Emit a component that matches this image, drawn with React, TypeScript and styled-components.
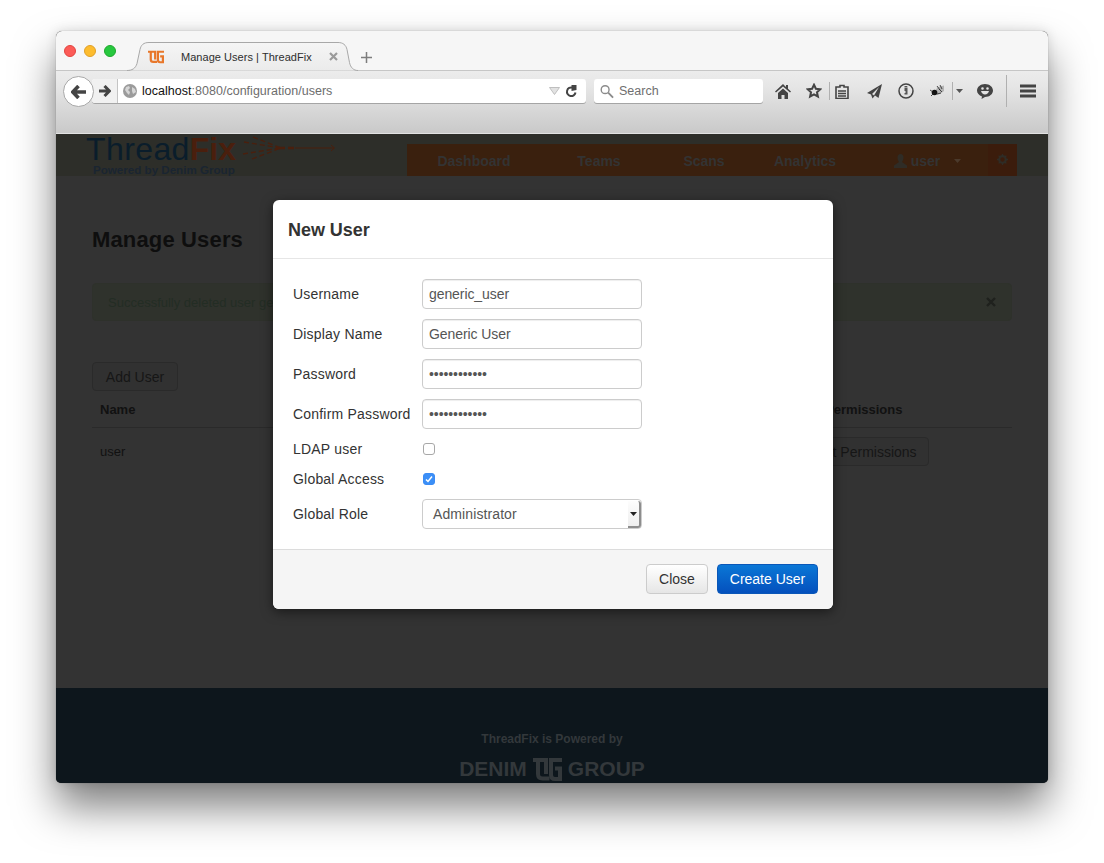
import React from "react";
import styled, { createGlobalStyle } from "styled-components";

const Global = createGlobalStyle`
  html, body { margin: 0; padding: 0; background: #fff; overflow: hidden; }
  body { font-family: "Liberation Sans", Arial, sans-serif; }
  * { box-sizing: border-box; }
`;

const Screen = styled.div`
  height: 863px;
  padding: 31px 56px 80px;
`;
const Win = styled.div`
  position: relative;
  width: 992px;
  height: 752px;
  border-radius: 6px 6px 5px 5px;
  display: flex;
  flex-direction: column;
  background: #333;
  box-shadow: 0 24px 42px rgba(0, 0, 0, 0.5), 0 0 12px rgba(0, 0, 0, 0.12), 0 0 1px rgba(0, 0, 0, 0.45);
`;
const TabStrip = styled.div`
  flex: none;
  height: 40px;
  display: flex;
  align-items: flex-end;
  padding-left: 8px;
  background: #f6f6f6;
  border-bottom: 1px solid #c6c6c6;
  border-radius: 6px 6px 0 0;
`;
const Lights = styled.div`
  display: flex;
  gap: 8px;
  align-self: flex-start;
  margin-top: 14px;
  width: 63px;
`;
const Light = styled.span<{ $c: string; $b: string }>`
  width: 12px;
  height: 12px;
  border-radius: 50%;
  background: ${(p) => p.$c};
  border: 1px solid ${(p) => p.$b};
`;
const Tab = styled.div`
  position: relative;
  width: 231px;
  height: 29px;
  margin-bottom: -1px;
  display: flex;
  align-items: center;
  padding: 0 20px 0 21px;
  font-size: 11px;
  color: #2e2e2e;
`;
const TabShape = styled.svg`
  position: absolute;
  inset: 0;
`;
const FaviconSlot = styled.span`
  position: relative;
  flex: none;
  display: flex;
  margin-right: 17px;
`;
const TabTitle = styled.span`
  position: relative;
  flex: 1;
  letter-spacing: 0.04px;
  white-space: nowrap;
`;
const TabClose = styled.svg`
  position: relative;
  flex: none;
`;
const NewTab = styled.svg`
  flex: none;
  margin: 0 0 7px 3px;
`;

const Toolbar = styled.div`
  flex: none;
  height: 63px;
  display: flex;
  align-items: flex-start;
  padding: 8px 0 0 36px;
  background: linear-gradient(#ececec, #e6e6e6 25%, #c9c9c9);
  border-bottom: 1px solid #e2e2e2;
`;
const BackCircle = styled.div`
  position: absolute;
  left: 7px;
  top: 45px;
  width: 31px;
  height: 31px;
  border-radius: 50%;
  background: #fff;
  border: 1px solid #a9a9a9;
  display: flex;
  align-items: center;
  justify-content: center;
  z-index: 2;
`;
const UrlBar = styled.div`
  flex: none;
  width: 494px;
  height: 24px;
  display: flex;
  align-items: center;
  background: #fff;
  border-radius: 3px;
  box-shadow: 0 1px 0 #a5a5a5;
  padding-right: 8px;
`;
const ForwardCell = styled.div`
  width: 26px;
  height: 100%;
  flex: none;
  padding-left: 7px;
  display: flex;
  align-items: center;
  background: #f1f1f1;
  border-right: 1px solid #c4c4c4;
  border-radius: 3px 0 0 3px;
`;
const Globe = styled.svg`
  flex: none;
  margin: 0 5px 0 5px;
`;
const UrlText = styled.span`
  flex: 1;
  font-size: 12.5px;
  color: #6d6d6d;
  letter-spacing: 0.02px;
  b { font-weight: 400; color: #111; }
`;
const UrlArrow = styled.svg`
  flex: none;
`;
const UrlReload = styled.svg`
  flex: none;
  margin-left: 5px;
`;
const SearchBox = styled.div`
  flex: none;
  width: 169px;
  height: 24px;
  margin-left: 8px;
  display: flex;
  align-items: center;
  gap: 5px;
  padding-left: 6px;
  background: #fff;
  border-radius: 3px;
  box-shadow: 0 1px 0 #a5a5a5;
  font-size: 12.5px;
  color: #6f6f6f;
`;
const ToolIcons = styled.div`
  height: 24px;
  display: flex;
  align-items: center;
  margin-left: 12px;
`;
const ToolIcon = styled.svg<{ $w: number; $ml?: number }>`
  flex: none;
  width: ${(p) => p.$w}px;
  margin-left: ${(p) => p.$ml ?? 0}px;
`;
const ToolSep = styled.span<{ $h?: number; $gap: number }>`
  flex: none;
  width: 1px;
  height: ${(p) => p.$h ?? 18}px;
  margin: 0 ${(p) => p.$gap}px;
  background: #b0b0b0;
`;

const Page = styled.div`
  flex: 1;
  display: flex;
  flex-direction: column;
  min-height: 0;
`;
const Header = styled.div`
  flex: none;
  height: 42px;
  display: flex;
  justify-content: space-between;
  align-items: flex-end;
  padding: 0 31px 0 30px;
  background: #2d2e29;
`;
const Logo = styled.div`
  position: relative;
  align-self: flex-start;
  height: 42px;
  width: 260px;
`;
const LogoWord = styled.div`
  font-size: 32px;
  line-height: 32px;
  margin-top: -1px;
  letter-spacing: 0.4px;
  color: #0a1d2b;
  white-space: nowrap;
  b { color: #4a1f0d; letter-spacing: 0; }
`;
const LogoTag = styled.div`
  font-size: 11.6px;
  font-weight: 700;
  line-height: 12px;
  margin: -1px 0 0 7px;
  color: #1a2531;
  white-space: nowrap;
`;
const LogoArrow = styled.svg`
  position: absolute;
  left: 155px;
  top: 2px;
`;
const Nav = styled.div`
  width: 610px;
  height: 32px;
  display: flex;
  background: #3a200e;
`;
const NavItem = styled.div<{ $w: number; $pl?: number }>`
  width: ${(p) => p.$w}px;
  display: flex;
  align-items: center;
  justify-content: center;
  gap: 4px;
  padding: 2px 0 0 ${(p) => p.$pl ?? 0}px;
  font-size: 14px;
  font-weight: 700;
  color: #333;
`;
const NavCaret = styled.svg`
  flex: none;
  margin-left: 10px;
`;
const NavGear = styled.div`
  width: 29px;
  display: flex;
  align-items: center;
  justify-content: center;
  padding-bottom: 2px;
  background: #3b1c0c;
`;
const Main = styled.div`
  flex: 1;
  padding: 51px 36px 0;
  background: #333;
`;
const Title = styled.h2`
  margin: 0;
  font-size: 22px;
  line-height: 26px;
  font-weight: 700;
  letter-spacing: 0.15px;
  color: #0e0e0e;
`;
const Alert = styled.div`
  height: 38px;
  margin-top: 30px;
  padding: 0 15px;
  display: flex;
  align-items: center;
  justify-content: space-between;
  background: #2f322c;
  border: 1px solid #2e312b;
  border-radius: 4px;
  font-size: 13px;
  color: #232d24;
`;
const AlertClose = styled.svg`
  flex: none;
`;
const GhostButton = styled.div`
  display: inline-flex;
  align-items: center;
  justify-content: center;
  border: 1px solid #2a2a2a;
  border-radius: 4px;
  background: #313131;
  color: #161616;
  font-size: 14px;
`;
const AddButton = styled(GhostButton)`
  width: 86px;
  height: 29px;
  margin-top: 41px;
`;
const Row = styled.div<{ $h: number; $line?: boolean }>`
  height: ${(p) => p.$h}px;
  display: grid;
  grid-template-columns: 702px 1fr;
  align-items: center;
  padding-left: 8px;
  border-bottom: ${(p) => (p.$line ? "1px solid #2a2a2a" : "none")};
  font-size: 13px;
  color: #111;
`;
const HeadCell = styled.span`
  font-weight: 700;
  white-space: nowrap;
`;
const PermHead = styled(HeadCell)`
  margin-left: -5px;
`;
const EditButton = styled(GhostButton)`
  width: 127px;
  height: 29px;
  padding-right: 2px;
`;
const Footer = styled.div`
  flex: none;
  height: 95px;
  padding-top: 44px;
  display: flex;
  flex-direction: column;
  align-items: center;
  background: #0d161c;
  color: #33383b;
  border-radius: 0 0 5px 5px;
`;
const FooterLine = styled.div`
  font-size: 12px;
  font-weight: 700;
  line-height: 14px;
`;
const FooterBrand = styled.div`
  display: flex;
  align-items: center;
  gap: 6px;
  margin-top: 11px;
  font-size: 21px;
  font-weight: 700;
  line-height: 24px;
`;

const Modal = styled.div`
  position: absolute;
  left: 217px;
  top: 169px;
  width: 560px;
  height: 409px;
  background: #fff;
  border-radius: 6px;
  box-shadow: 0 3px 12px rgba(0, 0, 0, 0.5);
  display: flex;
  flex-direction: column;
  overflow: hidden;
  z-index: 3;
`;
const ModalHead = styled.div`
  flex: none;
  height: 59px;
  padding: 2px 15px 0;
  display: flex;
  align-items: center;
  border-bottom: 1px solid #e6e6e6;
  font-size: 18px;
  font-weight: 700;
  letter-spacing: -0.05px;
  color: #333;
`;
const ModalBody = styled.div`
  flex: 1;
  padding: 20px 20px 0;
  display: flex;
  flex-direction: column;
  gap: 10px;
`;
const FormRow = styled.div<{ $h: number }>`
  height: ${(p) => p.$h}px;
  display: flex;
  align-items: center;
`;
const FieldLabel = styled.label`
  width: 129px;
  flex: none;
  font-size: 14px;
  letter-spacing: 0.2px;
  color: #333;
  white-space: nowrap;
`;
const TextField = styled.input`
  width: 220px;
  height: 30px;
  padding: 0 6px;
  border: 1px solid #ccc;
  border-radius: 4px;
  outline: none;
  background: #fff;
  color: #555;
  font: 14px "Liberation Sans", Arial, sans-serif;
  letter-spacing: -0.08px;
  box-shadow: inset 0 1px 1px rgba(0, 0, 0, 0.07);
`;
const Check = styled.span<{ $on?: boolean }>`
  width: 12px;
  height: 12px;
  margin-left: 1px;
  display: flex;
  align-items: center;
  justify-content: center;
  border-radius: 3px;
  border: 1px solid ${(p) => (p.$on ? "#3b8cf5" : "#a8a8a8")};
  background: ${(p) => (p.$on ? "#3b8ff7" : "#fff")};
`;
const SelectBox = styled.div`
  position: relative;
  width: 220px;
  height: 30px;
  display: flex;
  align-items: center;
  padding-left: 10px;
  border: 1px solid #ccc;
  border-radius: 4px;
  background: #fff;
  color: #555;
  font-size: 14px;
  letter-spacing: 0.1px;
`;
const SelectStep = styled.span`
  position: absolute;
  right: 0;
  top: 1px;
  bottom: 0;
  width: 13px;
  display: flex;
  align-items: center;
  justify-content: center;
  background: linear-gradient(#fdfdfd, #eee);
  border-right: 2px solid #8d8d8d;
  border-bottom: 2px solid #8d8d8d;
  border-radius: 0 3px 3px 0;
`;
const ModalFoot = styled.div`
  flex: none;
  height: 60px;
  padding: 14px 15px;
  display: flex;
  justify-content: flex-end;
  gap: 9px;
  background: #f5f5f5;
  border-top: 1px solid #dcdcdc;
`;
const CloseBtn = styled.div`
  width: 62px;
  height: 30px;
  display: flex;
  align-items: center;
  justify-content: center;
  border: 1px solid #ccc;
  border-radius: 4px;
  background: linear-gradient(#fff, #e6e6e6);
  color: #333;
  font-size: 14px;
`;
const CreateBtn = styled.div`
  width: 101px;
  height: 30px;
  display: flex;
  align-items: center;
  justify-content: center;
  border: 1px solid #0a57b8;
  border-radius: 4px;
  background: linear-gradient(#0a77d6, #0450bd);
  color: #fff;
  font-size: 14px;
`;

const DgMark = ({ w, h, c }: { w: number; h: number; c: string }) => (
  <svg width={w} height={h} viewBox="0 0 29 23" style={{ flex: "none" }}>
    <g fill="none" stroke={c} strokeWidth="4">
      <path d="M0 2H13V16" />
      <path d="M5 2V16Q5 20.500 9.500 20.500H16.500" />
      <path d="M29 2H18V17Q18 21 22 21H27V10.500H22" />
    </g>
  </svg>
);

export default function App() {
  return (
    <Screen>
      <Global />
      <Win>
        <TabStrip>
          <Lights>
            <Light $c="#fc5b57" $b="#e2443f" />
            <Light $c="#fdbc2e" $b="#e0a028" />
            <Light $c="#27c83f" $b="#1fa82e" />
          </Lights>
          <Tab>
            <TabShape width="231" height="29" viewBox="0 0 231 29">
              <defs>
                <linearGradient id="tabFill" x1="0" y1="0" x2="0" y2="1">
                  <stop offset="0" stopColor="#f5f5f5" />
                  <stop offset="1" stopColor="#ebebeb" />
                </linearGradient>
              </defs>
              <path
                d="M0 28.500c5 0 8.500-2 10-7l3-14c1-4.500 3.500-7 9-7h189c5 0 8 2.500 9 7l2.500 13c1 5 4 8 8.500 8"
                fill="url(#tabFill)"
                stroke="#a8a8a8"
                strokeWidth="1"
              />
            </TabShape>
            <FaviconSlot>
              <DgMark w={16} h={14} c="#e8772a" />
            </FaviconSlot>
            <TabTitle>Manage Users | ThreadFix</TabTitle>
            <TabClose width="9" height="9" viewBox="0 0 9 9">
              <path d="M1 1l7 7M8 1L1 8" stroke="#9a9a9a" strokeWidth="2.200" />
            </TabClose>
          </Tab>
          <NewTab width="11" height="11" viewBox="0 0 11 11">
            <path d="M5.500 0v11M0 5.500h11" stroke="#7d7d7d" strokeWidth="1.500" />
          </NewTab>
        </TabStrip>

        <BackCircle>
          <svg width="15" height="14" viewBox="0 0 15 14">
            <path d="M7.500 1L1.800 7l5.700 6M2 7H15" fill="none" stroke="#444" strokeWidth="3.600" />
          </svg>
        </BackCircle>

        <Toolbar>
          <UrlBar>
            <ForwardCell>
              <svg width="12" height="12" viewBox="0 0 12 12" style={{ flex: "none" }}>
                <path d="M5.500 1L10.500 6l-5 5M0 6h10" fill="none" stroke="#444" strokeWidth="3" />
              </svg>
            </ForwardCell>
            <Globe width="14" height="14" viewBox="0 0 14 14">
              <circle cx="7" cy="7" r="7" fill="#9b9b9b" />
              <path d="M3 3l3-1 1 2-2 2 2 2-1 3-2-2-2-3zM9 3l3 2 1 3-3 2-1-3z" fill="#d6d6d6" />
            </Globe>
            <UrlText>
              <b>localhost</b>:8080/configuration/users
            </UrlText>
            <UrlArrow width="11" height="8" viewBox="0 0 11 8">
              <path d="M0.500 0.500h10L5.500 7.500z" fill="#e2e2e2" stroke="#bfbfbf" />
            </UrlArrow>
            <UrlReload width="13" height="13" viewBox="0 0 13 13">
              <path d="M10.500 7.500A4.300 4.300 0 1 1 7.500 2.600" fill="none" stroke="#444" strokeWidth="2" />
              <path d="M6.500 0v6l5-1V0z" fill="#444" />
            </UrlReload>
          </UrlBar>
          <SearchBox>
            <svg width="14" height="15" viewBox="0 0 15 15" style={{ flex: "none" }}>
              <circle cx="5.500" cy="5.500" r="4.200" fill="none" stroke="#8b8b8b" strokeWidth="1.500" />
              <path d="M8.800 8.800L14 14" stroke="#8b8b8b" strokeWidth="2" />
            </svg>
            Search
          </SearchBox>
          <ToolIcons>
            <ToolIcon $w={16} height="15" viewBox="0 0 16 15">
              <path d="M8 0L0 7.500l1 1L8 2.500l7 6 1-1-3-2.800V1h-2v2zM3 9v6h3.500v-4h3v4H13V9L8 4.500z" fill="#444" />
            </ToolIcon>
            <ToolIcon $w={16} $ml={15} height="16" viewBox="0 0 16 16">
              <path d="M8 1.800l1.900 4 4.300.5-3.200 3 .9 4.300L8 11.400l-3.900 2.200.9-4.300-3.200-3 4.300-.5z" fill="none" stroke="#444" strokeWidth="2" />
            </ToolIcon>
            <ToolSep $gap={7} />
            <ToolIcon $w={14} $ml={-2} height="15" viewBox="0 0 14 15">
              <path d="M5 1.500h4V3h4v11.500H1V3h4zM3 7h8M3 9.500h8M3 12h8" fill="none" stroke="#444" strokeWidth="1.600" />
            </ToolIcon>
            <ToolIcon $w={15} $ml={18} height="15" viewBox="0 0 15 15">
              <path d="M15 0L0 9l4 1.500 1.500 4 2.500-3 3.500 2.500zM5 10l7-7-5 8.500z" fill="#444" fillRule="evenodd" />
            </ToolIcon>
            <ToolIcon $w={16} $ml={16} height="16" viewBox="0 0 16 16">
              <circle cx="8" cy="8" r="7" fill="none" stroke="#444" strokeWidth="1.500" />
              <path d="M6.500 4.500H9.500v7h-3V10h1V8h-1zM6.500 3h2.800v1h-2.800z" fill="#555" />
            </ToolIcon>
            <ToolIcon $w={16} $ml={16} height="12" viewBox="0 0 16 12">
              <path d="M4 7l4-5 6-1.500L14 6l-4 3-4 1z" fill="#b4b4b4" />
              <circle cx="4.500" cy="7.500" r="2.800" fill="#111" />
              <path d="M0 5l3 2M1 11l3-3M7 1l3 4M10 0l2 4M7 9l4-1M9 4l3 3" stroke="#222" strokeWidth="0.800" />
            </ToolIcon>
            <ToolSep $gap={6} />
            <ToolIcon $w={7} $ml={-3} height="4" viewBox="0 0 7 4">
              <path d="M0 0h7L3.500 4z" fill="#555" />
            </ToolIcon>
            <ToolIcon $w={16} $ml={14} height="15" viewBox="0 0 16 15">
              <path fillRule="evenodd" fill="#444" d="M8 0c4.400 0 8 2.900 8 6.500S12.400 13 8 13l-3.500 2 .5-2.600C2 11.500 0 9.200 0 6.500 0 2.900 3.600 0 8 0zM4 7c.6 2.300 2 3.500 4 3.500S11.400 9.300 12 7zM5.500 3.200a1.300 1.300 0 1 0 0 2.600 1.300 1.300 0 0 0 0-2.600zm5 0a1.300 1.300 0 1 0 0 2.600 1.300 1.300 0 0 0 0-2.600z" />
            </ToolIcon>
            <ToolSep $gap={13} $h={32} />
            <ToolIcon $w={16} height="14" viewBox="0 0 16 14">
              <path d="M0 2h16M0 7h16M0 12h16" stroke="#444" strokeWidth="2.800" />
            </ToolIcon>
          </ToolIcons>
        </Toolbar>

        <Page>
          <Header>
            <Logo>
              <LogoWord>
                Thread<b>Fix</b>
              </LogoWord>
              <LogoTag>Powered by Denim Group</LogoTag>
              <LogoArrow width="95" height="24" viewBox="0 0 95 24">
                <g stroke="#4a1f0d" strokeWidth="1.300" fill="none">
                  <path strokeDasharray="5 3" d="M12 1l28 11M3 6l37 6M2 18l38-6M11 23l29-11" />
                  <path strokeDasharray="6 3" strokeWidth="2.500" d="M38 12h16" />
                  <path strokeWidth="1" d="M54 12h39M90 9l3.500 3-3.500 3" />
                </g>
              </LogoArrow>
            </Logo>
            <Nav>
              <NavItem $w={134}>Dashboard</NavItem>
              <NavItem $w={116}>Teams</NavItem>
              <NavItem $w={94}>Scans</NavItem>
              <NavItem $w={108}>Analytics</NavItem>
              <NavItem $w={129} $pl={8}>
                <svg width="13" height="14" viewBox="0 0 13 14">
                  <path fill="#2f2c26" d="M6.500 0C8.500 0 9.500 1.500 9.500 3.500S8.500 7.500 8 8l5 3.500V14H0v-2.500L5 8c-.5-.5-1.500-2.500-1.500-4.500S4.500 0 6.500 0z" />
                </svg>
                <span>user</span>
                <NavCaret width="7" height="4" viewBox="0 0 7 4">
                  <path d="M0 0h7L3.500 4z" fill="#4b3a2c" />
                </NavCaret>
              </NavItem>
              <NavGear>
                <svg width="11" height="11" viewBox="0 0 11 11">
                  <circle cx="5.500" cy="5.500" r="3.300" fill="none" stroke="#2f2c26" strokeWidth="2.200" />
                  <path d="M5.500 0v11M0 5.500h11M1.600 1.600l7.800 7.800M9.400 1.600L1.600 9.400" stroke="#2f2c26" strokeWidth="1.300" strokeDasharray="2 7" />
                </svg>
              </NavGear>
            </Nav>
          </Header>
          <Main>
            <Title>Manage Users</Title>
            <Alert>
              <span>Successfully deleted user generic_user.</span>
              <AlertClose width="10" height="10" viewBox="0 0 10 10">
                <path d="M1 1l8 8M9 1L1 9" stroke="#1f211d" strokeWidth="2.400" />
              </AlertClose>
            </Alert>
            <AddButton>Add User</AddButton>
            <Row $h={37} $line>
              <HeadCell>Name</HeadCell>
              <PermHead>Edit Permissions</PermHead>
            </Row>
            <Row $h={47}>
              <span>user</span>
              <EditButton>Edit Permissions</EditButton>
            </Row>
          </Main>
          <Footer>
            <FooterLine>ThreadFix is Powered by</FooterLine>
            <FooterBrand>
              DENIM
              <DgMark w={29} h={23} c="#33383b" />
              GROUP
            </FooterBrand>
          </Footer>
        </Page>

        <Modal>
          <ModalHead>New User</ModalHead>
          <ModalBody>
            <FormRow $h={30}>
              <FieldLabel>Username</FieldLabel>
              <TextField readOnly value="generic_user" />
            </FormRow>
            <FormRow $h={30}>
              <FieldLabel>Display Name</FieldLabel>
              <TextField readOnly value="Generic User" />
            </FormRow>
            <FormRow $h={30}>
              <FieldLabel>Password</FieldLabel>
              <TextField readOnly type="password" value="genericuser1" />
            </FormRow>
            <FormRow $h={30}>
              <FieldLabel>Confirm Password</FieldLabel>
              <TextField readOnly type="password" value="genericuser1" />
            </FormRow>
            <FormRow $h={20}>
              <FieldLabel>LDAP user</FieldLabel>
              <Check />
            </FormRow>
            <FormRow $h={20}>
              <FieldLabel>Global Access</FieldLabel>
              <Check $on>
                <svg width="8" height="8" viewBox="0 0 8 8">
                  <path d="M1 4.500L3 6.500 7 1.500" fill="none" stroke="#fff" strokeWidth="1.500" />
                </svg>
              </Check>
            </FormRow>
            <FormRow $h={30}>
              <FieldLabel>Global Role</FieldLabel>
              <SelectBox>
                Administrator
                <SelectStep>
                  <svg width="7" height="4" viewBox="0 0 7 4">
                    <path d="M0 0h7L3.500 4z" fill="#222" />
                  </svg>
                </SelectStep>
              </SelectBox>
            </FormRow>
          </ModalBody>
          <ModalFoot>
            <CloseBtn>Close</CloseBtn>
            <CreateBtn>Create User</CreateBtn>
          </ModalFoot>
        </Modal>
      </Win>
    </Screen>
  );
}
